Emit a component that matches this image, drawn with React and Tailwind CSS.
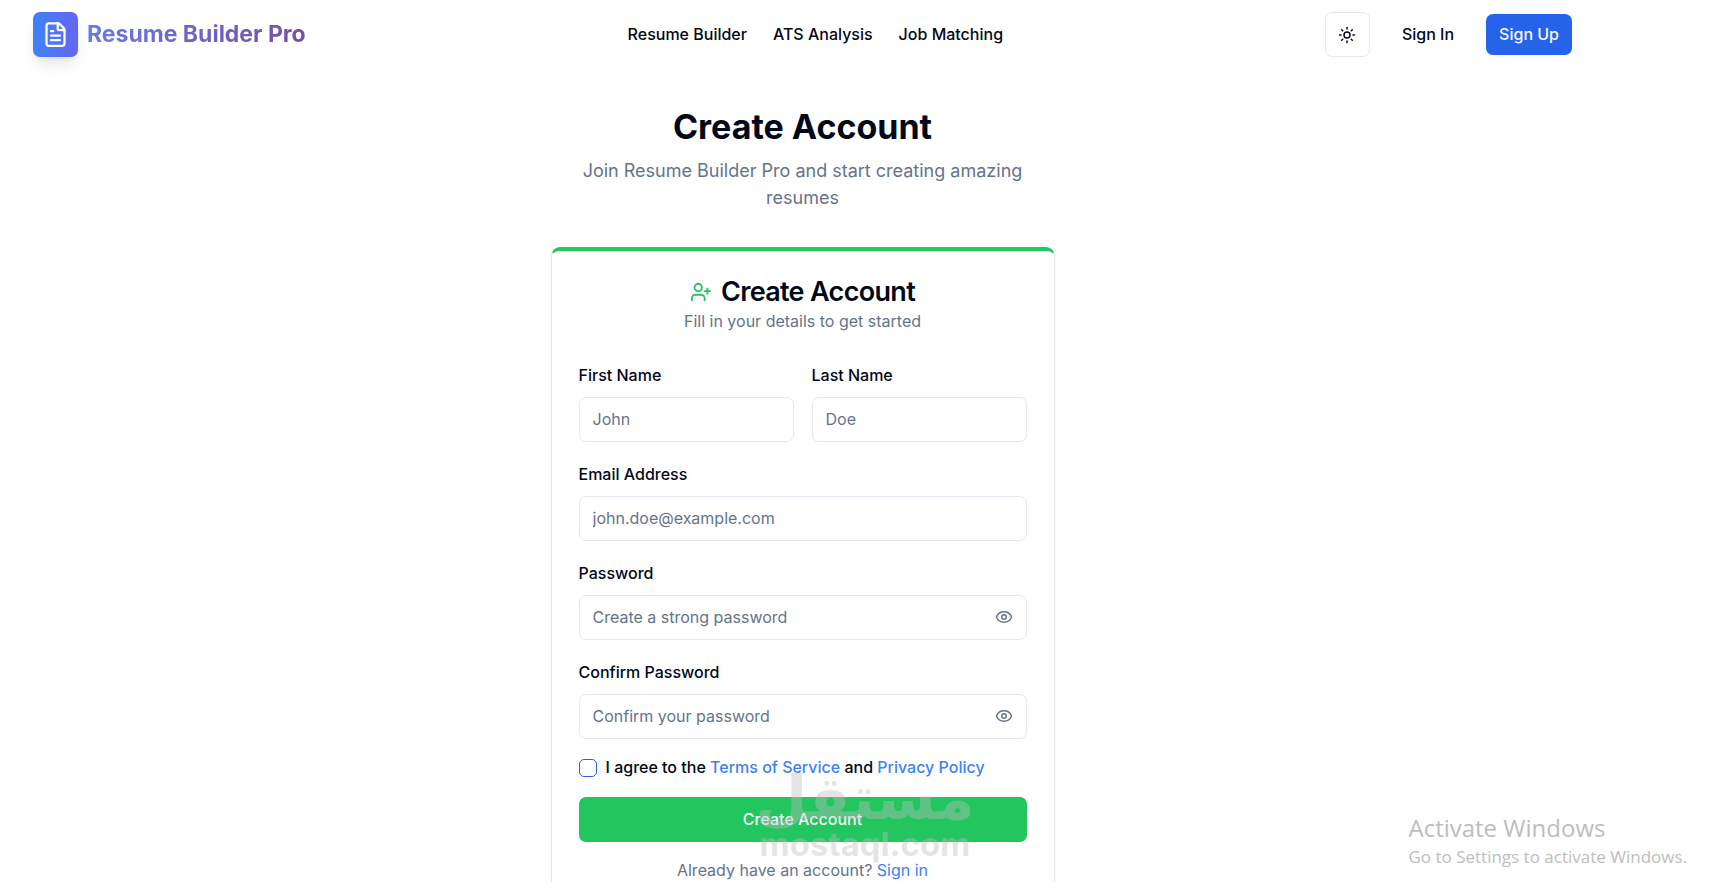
import React, { useState } from 'react';
import { Eye, EyeOff, FileText, Sun, UserPlus } from 'lucide-react';

const inputClass =
  'block h-[45px] w-full rounded-[7px] border border-[#e2e8f0] bg-white px-[13px] pb-[2px] text-[16px] text-[#020817] placeholder:text-[#64748b] placeholder:opacity-100';

const labelClass = 'mb-[7px] block leading-[29px] font-medium';

const Header = () => (
  <header className="flex h-[69px] items-center justify-between px-[33px] text-[16px] leading-[22px] font-medium">
    <a href="#home" className="flex items-center gap-[9px]">
      <span className="flex size-[45px] items-center justify-center rounded-[7px] bg-linear-to-r from-[#3b82f6] to-[#6366f1] text-white shadow-lg">
        <FileText size={27} />
      </span>
      <span className="bg-[linear-gradient(135deg,#667eea,#764ba2)] bg-clip-text pb-[2px] text-[23px] leading-[32px] font-bold text-transparent">
        Resume Builder Pro
      </span>
    </a>

    <nav className="flex gap-[26px] pb-[2px]">
      <a href="#builder">Resume Builder</a>
      <a href="#ats">ATS Analysis</a>
      <a href="#jobs">Job Matching</a>
    </nav>

    <div className="flex items-center gap-[18px]">
      <button
        type="button"
        aria-label="Toggle theme"
        className="flex size-[45px] items-center justify-center rounded-[7px] border border-[#e2e8f0]"
      >
        <Sun size={18} />
      </button>
      <a href="#signin" className="px-[14px] pb-[2px]">Sign In</a>
      <a href="#signup" className="flex h-[41px] items-center rounded-[7px] bg-[#2563eb] px-[13px] pb-[2px] text-[#f8fafc]">
        Sign Up
      </a>
    </div>
  </header>
);

const Field = ({ id, label, type = 'text', placeholder }) => (
  <div>
    <label htmlFor={id} className={labelClass}>{label}</label>
    <input id={id} type={type} placeholder={placeholder} className={inputClass} />
  </div>
);

const PasswordField = ({ id, label, placeholder }) => {
  const [visible, setVisible] = useState(false);

  return (
    <div>
      <label htmlFor={id} className={labelClass}>{label}</label>
      <div className="relative">
        <input id={id} type={visible ? 'text' : 'password'} placeholder={placeholder} className={inputClass} />
        <button
          type="button"
          aria-label={visible ? 'Hide password' : 'Show password'}
          onClick={() => setVisible(!visible)}
          className="absolute inset-y-0 right-0 flex items-center px-[14px] pb-[2px] text-[#64748b]"
        >
          {visible ? <EyeOff size={18} /> : <Eye size={18} />}
        </button>
      </div>
    </div>
  );
};

const SignUpCard = () => (
  <div className="rounded-[9px] border border-t-4 border-[#e2e8f0] border-t-[#22c55e] bg-white shadow-xs">
    <div className="p-[27px] text-center">
      <h2 className="mb-[7px] flex items-center justify-center gap-[9px] text-[27px] leading-[27px] font-semibold tracking-tight">
        <UserPlus size={22} className="text-[#22c55e]" />
        Create Account
      </h2>
      <p className="pb-[3px] leading-[19px] text-[#64748b]">Fill in your details to get started</p>
    </div>

    <form className="flex flex-col gap-[18px] px-[27px] pb-[27px]" onSubmit={(e) => e.preventDefault()}>
      <div className="grid grid-cols-2 gap-[18px]">
        <Field id="firstName" label="First Name" placeholder="John" />
        <Field id="lastName" label="Last Name" placeholder="Doe" />
      </div>
      <Field id="email" label="Email Address" type="email" placeholder="john.doe@example.com" />
      <PasswordField id="password" label="Password" placeholder="Create a strong password" />
      <PasswordField id="confirmPassword" label="Confirm Password" placeholder="Confirm your password" />

      <div className="flex items-center gap-[9px] leading-[20px] font-medium">
        <input
          id="terms"
          type="checkbox"
          className="size-[18px] appearance-none rounded-[5px] border border-[#2563eb] checked:bg-[#2563eb]"
        />
        <label htmlFor="terms" className="pb-[2px]">
          I agree to the <a href="#terms" className="text-[#3b82f6]">Terms of Service</a> and{' '}
          <a href="#privacy" className="text-[#3b82f6]">Privacy Policy</a>
        </label>
      </div>

      <button type="submit" className="h-[45px] rounded-[7px] bg-[#22c55e] pb-[2px] font-medium text-[#f8fafc]">
        Create Account
      </button>

      <p className="text-center leading-[20px] text-[#64748b]">
        Already have an account? <a href="#signin" className="text-[#3b82f6]">Sign in</a>
      </p>
    </form>
  </div>
);

const App = () => {
  return (
    <div className="relative h-screen overflow-hidden bg-white font-['Inter',sans-serif] text-[16px] text-[#020817]">
      <div className="max-w-[1605px]">
        <Header />
        <main className="mx-auto max-w-[504px] pt-[38px]">
          <div className="mb-[36px] text-center">
            <h1 className="mb-[11px] text-[34px] leading-[39px] font-bold">Create Account</h1>
            <p className="text-[18px] leading-[27px] text-[#64748b]">
              Join Resume Builder Pro and start creating amazing resumes
            </p>
          </div>
          <SignUpCard />
        </main>
      </div>

      <div className="pointer-events-none absolute top-[770px] left-[760px] flex w-[210px] flex-col items-center font-bold text-[#bebebe] opacity-40">
        <span lang="ar" className="font-['DejaVu_Sans',sans-serif] text-[60px] leading-[56px]">مستقل</span>
        <span className="text-[33px] leading-[36px]">mostaql.com</span>
      </div>

      <div className="pointer-events-none absolute right-[44px] bottom-[12px] font-['Open_Sans',sans-serif] text-[#bdbdbd]">
        <p className="text-[24px] leading-[32px]">Activate Windows</p>
        <p className="text-[17px] leading-[26px]">Go to Settings to activate Windows.</p>
      </div>
    </div>
  );
};

export default App;
